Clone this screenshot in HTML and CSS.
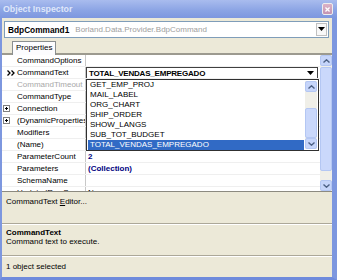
FILE: index.html
```html
<!DOCTYPE html>
<html lang="en">
<head>
    <meta charset="UTF-8">
    <title>Object Inspector</title>
    <link rel="stylesheet" href="styles.css">
</head>
<body>
    <div class="window">
        <div class="titlebar">
            <span class="title">Object Inspector</span>
            <span class="close">
                <svg width="11" height="11" viewBox="0 0 11 11"><path d="M3 3 L8 8 M8 3 L3 8" stroke="#fff" stroke-width="1.6"/></svg>
            </span>
        </div>
        <div class="frame">
            <div class="combo">
                <b>BdpCommand1</b>
                <span class="type">Borland.Data.Provider.BdpCommand</span>
                <span class="combo-btn">
                    <svg width="7" height="5" viewBox="0 0 7 5"><path d="M0 0 H7 L3.5 4 Z" fill="#000"/></svg>
                </span>
            </div>
            <div class="tabs">
                <div class="tab">Properties</div>
            </div>
            <div class="grid">
                <div class="rows">
                    <div class="row"><span class="gut"></span><span class="name">CommandOptions</span><span class="val"></span></div>
                    <div class="row">
                        <span class="gut">
                            <svg class="cur" width="8" height="6" viewBox="0 0 8 6"><path d="M0.5 0.5 L3 3 L0.5 5.5 M4.5 0.5 L7 3 L4.5 5.5" stroke="#000" stroke-width="1.3" fill="none"/></svg>
                        </span>
                        <span class="name">CommandText</span>
                        <span class="val">
                            <span class="edit">
                                <b>TOTAL_VENDAS_EMPREGADO</b>
                                <svg width="7" height="5" viewBox="0 0 7 5"><path d="M0 0 H7 L3.5 4 Z" fill="#000"/></svg>
                            </span>
                        </span>
                    </div>
                    <div class="row"><span class="gut"></span><span class="name dim">CommandTimeout</span><span class="val"></span></div>
                    <div class="row"><span class="gut"></span><span class="name">CommandType</span><span class="val"></span></div>
                    <div class="row">
                        <span class="gut"><svg class="plus" width="7" height="7" viewBox="0 0 7 7"><rect x="0.5" y="0.5" width="6" height="6" fill="#fff" stroke="#808080"/><path d="M2 3.5 H5 M3.5 2 V5" stroke="#000"/></svg></span>
                        <span class="name">Connection</span><span class="val"></span>
                    </div>
                    <div class="row">
                        <span class="gut"><svg class="plus" width="7" height="7" viewBox="0 0 7 7"><rect x="0.5" y="0.5" width="6" height="6" fill="#fff" stroke="#808080"/><path d="M2 3.5 H5 M3.5 2 V5" stroke="#000"/></svg></span>
                        <span class="name">(DynamicProperties)</span><span class="val"></span>
                    </div>
                    <div class="row"><span class="gut"></span><span class="name">Modifiers</span><span class="val"></span></div>
                    <div class="row"><span class="gut"></span><span class="name">(Name)</span><span class="val"></span></div>
                    <div class="row"><span class="gut"></span><span class="name">ParameterCount</span><span class="val strong">2</span></div>
                    <div class="row"><span class="gut"></span><span class="name">Parameters</span><span class="val strong">(Collection)</span></div>
                    <div class="row"><span class="gut"></span><span class="name">SchemaName</span><span class="val"></span></div>
                    <div class="row"><span class="gut"></span><span class="name">UpdatedRowSource</span><span class="val">None</span></div>

                    <div class="popup">
                        <div class="items">
                            <div class="item">GET_EMP_PROJ</div>
                            <div class="item">MAIL_LABEL</div>
                            <div class="item">ORG_CHART</div>
                            <div class="item">SHIP_ORDER</div>
                            <div class="item">SHOW_LANGS</div>
                            <div class="item">SUB_TOT_BUDGET</div>
                            <div class="item selected">TOTAL_VENDAS_EMPREGADO</div>
                        </div>
                        <div class="scroll small">
                            <span class="arrow"><svg width="7" height="4" viewBox="0 0 7 4"><path d="M0.5 3.5 L3.5 0.8 L6.5 3.5" stroke="#4d6185" stroke-width="1.4" fill="none"/></svg></span>
                            <span class="track"><span class="thumb"></span></span>
                            <span class="arrow"><svg width="7" height="4" viewBox="0 0 7 4"><path d="M0.5 0.5 L3.5 3.2 L6.5 0.5" stroke="#4d6185" stroke-width="1.4" fill="none"/></svg></span>
                        </div>
                    </div>
                </div>
                <div class="scroll big">
                    <span class="arrow"><svg width="7" height="4" viewBox="0 0 7 4"><path d="M0.5 3.5 L3.5 0.8 L6.5 3.5" stroke="#4d6185" stroke-width="1.4" fill="none"/></svg></span>
                    <span class="track"><span class="thumb"></span></span>
                    <span class="arrow"><svg width="7" height="4" viewBox="0 0 7 4"><path d="M0.5 0.5 L3.5 3.2 L6.5 0.5" stroke="#4d6185" stroke-width="1.4" fill="none"/></svg></span>
                </div>
            </div>
            <div class="panel verbs">CommandText <u>E</u>ditor...</div>
            <div class="panel desc">
                <b>CommandText</b>
                <div>Command text to execute.</div>
            </div>
            <div class="panel status">1 object selected</div>
        </div>
    </div>
</body>
</html>
```

FILE: styles.css
```css
body {
    margin: 0;
    font-family: "Liberation Sans", Arial, sans-serif;
    font-size: 8px;
    color: #000;
    background: #fff;
}

.window {
    width: 337px;
    height: 280px;
    display: flex;
    flex-direction: column;
}

.titlebar {
    height: 18px;
    display: flex;
    align-items: center;
    justify-content: space-between;
    padding: 0 4px 0 3px;
    background: linear-gradient(#a9bcee, #8aa3e4 60%, #7d97df);
}

.title {
    color: #dfe7fa;
    font-weight: bold;
    font-size: 8.8px;
}

.close {
    width: 11px;
    height: 12px;
    display: flex;
    align-items: center;
    justify-content: center;
    border: 1px solid #eee;
    border-radius: 2px;
    background: linear-gradient(#dcb2c6, #c394b3);
    box-sizing: border-box;
}

.frame {
    flex: 1;
    display: flex;
    flex-direction: column;
    background: #ece9d8;
    border-left: 2px solid #7d97df;
    border-right: 5px solid #7d97df;
    border-bottom: 3px solid #6f8bdc;
}

.combo {
    height: 17px;
    margin: 3px 3px 0 2px;
    box-sizing: border-box;
    border: 1px solid #7f9db9;
    background: #fff;
    display: flex;
    align-items: center;
    padding-left: 3px;
}

.combo b {
    font-size: 8.3px;
}

.combo .type {
    color: #a0a0a0;
    margin-left: 6px;
    flex: 1;
}

.combo-btn {
    width: 11px;
    height: 13px;
    margin-right: 1px;
    display: flex;
    align-items: center;
    justify-content: center;
    border: 1px solid #c0c0c0;
    box-sizing: border-box;
    background: #f8f8f8;
}

.tabs {
    height: 17px;
    box-sizing: border-box;
    padding: 3px 0 0 10px;
    border-bottom: 2px solid #9c9a8f;
    display: flex;
}

.tab {
    height: 14px;
    margin-bottom: -2px;
    box-sizing: border-box;
    padding: 0 3px;
    line-height: 12px;
    border: 1px solid #8a8f90;
    border-bottom: none;
    background: #fcfcfe;
}

.grid {
    height: 137px;
    display: flex;
    background: #fff;
    border-bottom: 1px solid #8c8a80;
    box-sizing: border-box;
}

.rows {
    flex: 1;
    position: relative;
    overflow: hidden;
}

.row {
    display: grid;
    grid-template-columns: 14px 70px 1fr;
    height: 12px;
    line-height: 11px;
    box-sizing: border-box;
    border-bottom: 1px solid #efefef;
}

.gut {
    display: flex;
    align-items: center;
}

.plus {
    margin-left: 1px;
}

.cur {
    margin-left: 5px;
}

.name {
    padding-left: 1px;
    white-space: nowrap;
    overflow: hidden;
    border-right: 1px solid #c8c8c8;
}

.name.dim {
    color: #a8a8a8;
}

.val {
    padding-left: 2px;
    white-space: nowrap;
    overflow: hidden;
}

.val.strong {
    color: #000080;
    font-weight: bold;
}

.row .val:has(.edit) {
    padding-left: 0;
}

.edit {
    display: flex;
    align-items: center;
    height: 12px;
    margin-right: 2px;
    box-sizing: border-box;
    border: 1px solid #404040;
    padding: 0 3px 0 2px;
    background: #fff;
}

.edit b {
    flex: 1;
    letter-spacing: -0.2px;
}

.popup {
    position: absolute;
    left: 84px;
    top: 24px;
    width: 233px;
    height: 72px;
    box-sizing: border-box;
    border: 1px solid #303030;
    background: #fff;
    display: flex;
}

.items {
    flex: 1;
    padding: 0 1px;
}

.item {
    height: 10px;
    line-height: 10px;
    padding-left: 2px;
}

.item.selected {
    background: #316ac5;
    color: #fff;
}

.scroll {
    width: 12px;
    display: flex;
    flex-direction: column;
    background: #f0efe8;
}

.scroll.small {
    margin: 1px 1px 1px 0;
}

.arrow {
    height: 11px;
    display: flex;
    align-items: center;
    justify-content: center;
    background: #c6d5fa;
    border: 1px solid #b4c7f3;
    border-radius: 2px;
    box-sizing: border-box;
}

.track {
    flex: 1;
    display: flex;
    flex-direction: column;
}

.thumb {
    background: #cad8fb;
    border: 1px solid #b4c7f3;
    border-radius: 2px;
}

.small .thumb {
    margin-top: 16px;
    height: 28px;
}

.big .thumb {
    margin-top: 1px;
    height: 102px;
}

.panel {
    padding-left: 4px;
    border-bottom: 1px solid #aca899;
    box-shadow: 0 1px 0 #fff;
}

.verbs {
    height: 32px;
    padding-top: 5px;
    box-sizing: border-box;
}

.desc {
    height: 32px;
    padding-top: 4px;
    box-sizing: border-box;
    line-height: 9px;
}

.status {
    flex: 1;
    border-bottom: none;
    box-shadow: none;
    display: flex;
    align-items: center;
}
```
